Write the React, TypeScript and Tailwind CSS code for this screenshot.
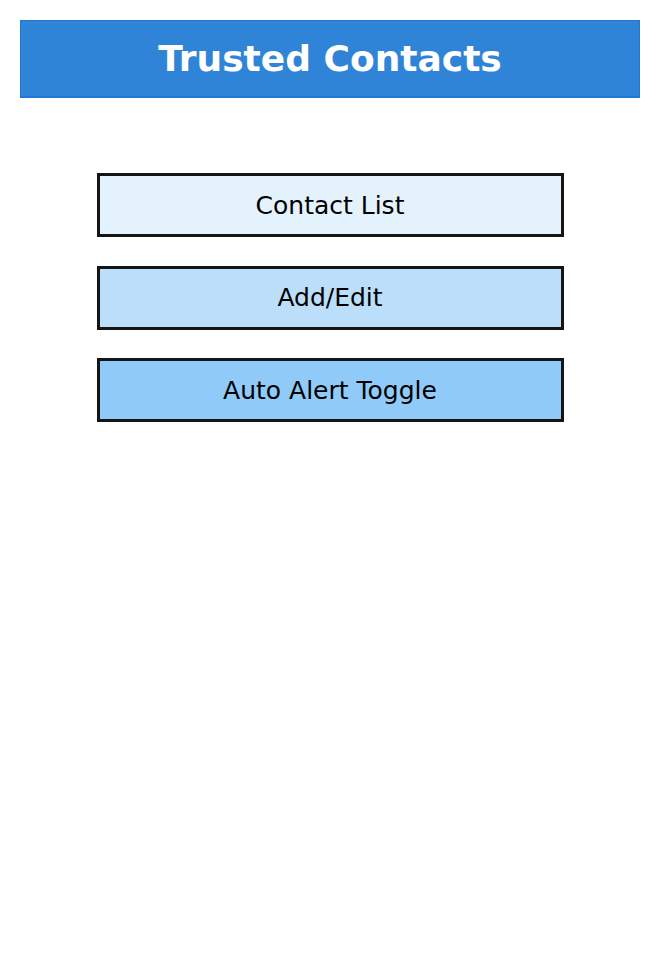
export default function App() {
  const items = [
    { label: "Contact List", bg: "bg-[#e3f2fd]" },
    { label: "Add/Edit", bg: "bg-[#bbdefb]" },
    { label: "Auto Alert Toggle", bg: "bg-[#90caf9]" },
  ];
  return (
    <div className="w-[660px] h-[964px] bg-white flex flex-col items-center pt-[20px]" style={{ fontFamily: '"DejaVu Sans", sans-serif' }}>
      <div className="w-[620px] h-[78px] bg-[#3084d8] border border-[#1f78d4] border-b-2 flex items-center justify-center">
        <span className="text-white font-bold text-[36px] leading-none">Trusted Contacts</span>
      </div>
      <div className="flex flex-col gap-[28.5px] mt-[75px]">
        {items.map((it) => (
          <div key={it.label} className={`w-[467px] h-[64px] border-[3px] border-[#151515] ${it.bg} flex items-center justify-center`}>
            <span className="text-black text-[25px] leading-none">{it.label}</span>
          </div>
        ))}
      </div>
    </div>
  );
}
